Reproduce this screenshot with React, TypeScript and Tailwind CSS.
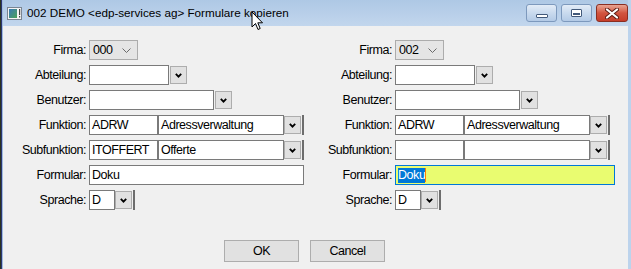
import React from "react";

const ui = { fontFamily: "'Liberation Sans Narrow', 'Liberation Sans', Arial, sans-serif" };
const title = { fontFamily: "'Liberation Sans', Arial, sans-serif" };

function Chevron() {
  return (
    <svg width="7" height="5" viewBox="0 0 7 5">
      <path d="M0.8 0.8 L3.5 3.6 L6.2 0.8" fill="none" stroke="#000" strokeWidth="1.8" />
    </svg>
  );
}

function DropBtn() {
  return (
    <div className="ml-px flex h-[18px] w-[17px] items-center justify-center border border-[#adadad] bg-[#e1e1e1]">
      <Chevron />
    </div>
  );
}

function TextBox({ w, value = "" }: { w: number; value?: string }) {
  return (
    <div
      className="flex h-[20px] items-center border border-[#7a7a7a] bg-white px-[2px] text-black"
      style={{ width: w }}
    >
      {value}
    </div>
  );
}

// textbox + dropdown button + sunken edge on the right
function Combo({ w, value = "" }: { w: number; value?: string }) {
  return (
    <div className="flex h-[20px] items-center" style={{ width: w }}>
      <div className="flex h-[20px] flex-1 items-center border border-[#7a7a7a] bg-white px-[2px]">{value}</div>
      <div className="flex h-[18px] w-[17px] items-center justify-center border border-[#adadad] bg-[#e1e1e1]">
        <Chevron />
      </div>
      <div className="ml-px h-[20px] w-[2px] bg-[#6d6d6d]" />
    </div>
  );
}

function FirmaSelect({ value }: { value: string }) {
  return (
    <div className="flex h-[20px] w-[49px] items-center justify-between border border-[#acacac] bg-[#e5e5e5] pl-[3px] pr-[6px]">
      <span>{value}</span>
      <svg width="9" height="5" viewBox="0 0 9 5">
        <path d="M0.5 0.5 L4.5 4.5 L8.5 0.5" fill="none" stroke="#6a6a6a" strokeWidth="1" />
      </svg>
    </div>
  );
}

function Row({ label, children }: { label: string; children: React.ReactNode }) {
  return (
    <div className="flex h-[20px] items-center">
      <div className="w-[84px] pr-px text-right text-black">{label}</div>
      <div className="ml-[2px] flex items-center">{children}</div>
    </div>
  );
}

function Column({ firma, sub, subText, focus }: { firma: string; sub: string; subText: string; focus: boolean }) {
  return (
    <div className="flex w-[306px] flex-col gap-[5px]">
      <Row label="Firma:">
        <FirmaSelect value={firma} />
      </Row>
      <Row label="Abteilung:">
        <TextBox w={80} />
        <DropBtn />
      </Row>
      <Row label="Benutzer:">
        <TextBox w={125} />
        <DropBtn />
      </Row>
      <Row label="Funktion:">
        <TextBox w={69} value="ADRW" />
        <Combo w={146} value="Adressverwaltung" />
      </Row>
      <Row label="Subfunktion:">
        <TextBox w={69} value={sub} />
        <Combo w={146} value={subText} />
      </Row>
      <Row label="Formular:">
        {focus ? (
          <div className="flex h-[20px] w-[220px] items-center border border-[#0078d7] bg-[#e9fc70] px-[2px]">
            <span className="bg-[#0078d7] leading-[15px] text-white">Doku</span>
            <span className="h-[14px] w-px bg-[#ff8000]" />
          </div>
        ) : (
          <TextBox w={215} value="Doku" />
        )}
      </Row>
      <Row label="Sprache:">
        <Combo w={46} value="D" />
      </Row>
    </div>
  );
}

function CaptionBtn({ children, close = false }: { children: React.ReactNode; close?: boolean }) {
  return (
    <div
      className={
        "flex h-[18px] items-center justify-center rounded-[3px] border " +
        (close
          ? "w-[32px] border-[#8a2e22] bg-gradient-to-b from-[#e8a493] via-[#d2543f] to-[#c63d2a]"
          : "w-[31px] border-[#7d99bd] bg-gradient-to-b from-[#e3ecf7] via-[#c9daee] to-[#b3cae6]")
      }
    >
      {children}
    </div>
  );
}

export default function App() {
  return (
    <div className="relative flex h-[269px] w-[631px] overflow-hidden bg-[#bcd3ec] text-[12.5px] tracking-[-0.45px]" style={ui}>
      <div className="w-px bg-[#2a3320]" />
      <div className="w-px bg-[#2c3570]" />
      <div className="flex flex-1 flex-col border-l border-[#9fbde0] pr-[3px]">
        {/* title bar */}
        <div className="flex h-[26px] items-center bg-gradient-to-b from-[#aec8e5] to-[#c2d6ed] pl-[4px] tracking-normal" style={title}>
          <svg width="15" height="13" viewBox="0 0 15 13">
            <rect x="0.5" y="0.5" width="14" height="12" fill="#f4f4f4" stroke="#7a8592" />
            <rect x="2" y="2" width="8" height="9" fill="url(#g)" />
            <defs>
              <linearGradient id="g" x1="0" y1="0" x2="1" y2="1">
                <stop offset="0" stopColor="#3a78b5" />
                <stop offset="1" stopColor="#4aa35a" />
              </linearGradient>
            </defs>
            <rect x="12" y="2" width="1.2" height="6" fill="#444" />
            <rect x="12" y="9" width="1.2" height="1.5" fill="#444" />
          </svg>
          <span className="ml-[5px] text-[11.7px] text-black">002 DEMO &lt;edp-services ag&gt; Formulare kopieren</span>
          <div className="ml-auto flex gap-[4px] self-start pt-[4px]">
            <CaptionBtn>
              <div className="mt-[6px] h-[4px] w-[12px] rounded-[1px] border border-[#42597a] bg-white" />
            </CaptionBtn>
            <CaptionBtn>
              <div className="h-[8px] w-[11px] rounded-[1px] border border-[#42597a] bg-white p-[1px]">
                <div className="mt-[2px] h-[2px] w-full bg-[#42597a]" />
              </div>
            </CaptionBtn>
            <CaptionBtn close>
              <svg width="14" height="11" viewBox="0 0 14 11">
                <path d="M2 1.5 L12 9.5 M12 1.5 L2 9.5" stroke="#5a1a12" strokeWidth="4" strokeLinecap="round" />
                <path d="M2 1.5 L12 9.5 M12 1.5 L2 9.5" stroke="#fff" strokeWidth="2.2" strokeLinecap="round" />
              </svg>
            </CaptionBtn>
          </div>
        </div>

        {/* content */}
        <div className="flex flex-1 flex-col bg-[#f0f0f0] pt-[14px] text-black">
          <div className="flex">
            <Column firma="000" sub="ITOFFERT" subText="Offerte" focus={false} />
            <Column firma="002" sub="" subText="" focus={true} />
          </div>
          <div className="mt-[30px] flex gap-[11px] pl-[221px]">
            <button className="h-[22px] w-[75px] border border-[#adadad] bg-[#e1e1e1] text-black">OK</button>
            <button className="h-[22px] w-[75px] border border-[#adadad] bg-[#e1e1e1] text-black">Cancel</button>
          </div>
        </div>
      </div>

      {/* mouse pointer */}
      <svg className="absolute left-[251px] top-[11px]" width="13" height="20" viewBox="0 0 13 20">
        <path d="M1 1 L1 16 L4.5 12.5 L7 18.5 L9.2 17.5 L6.8 11.8 L11.5 11.8 Z" fill="#fff" stroke="#000" strokeWidth="1" strokeLinejoin="round" />
      </svg>
    </div>
  );
}
